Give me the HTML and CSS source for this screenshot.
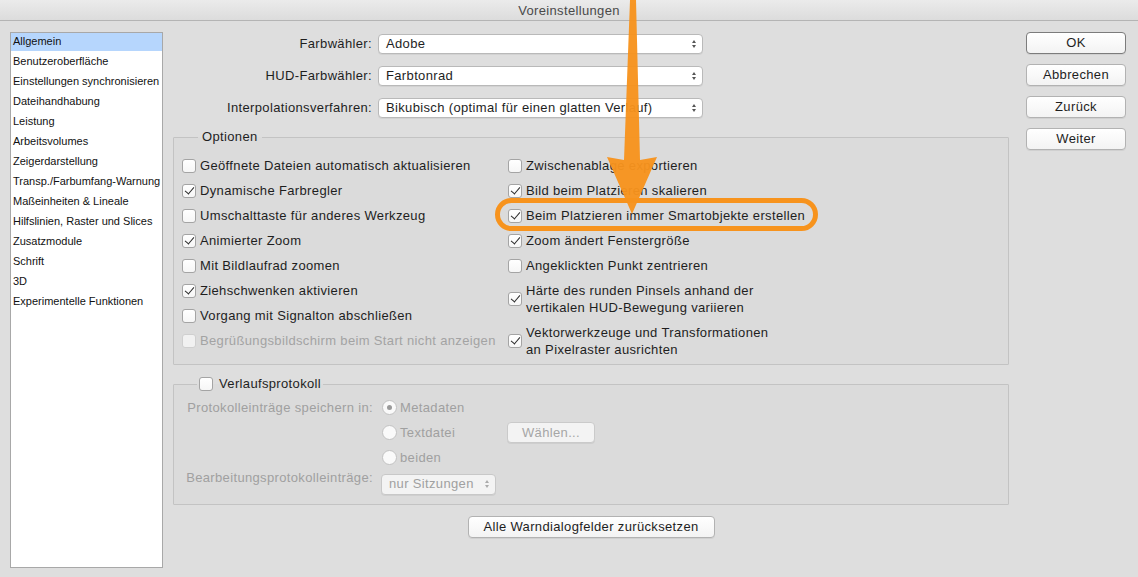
FILE: index.html
```html
<!DOCTYPE html>
<html lang="de">
<head>
<meta charset="utf-8">
<title>Voreinstellungen</title>
<link rel="stylesheet" href="styles.css">
</head>
<body>

<!-- Title bar -->
<div class="titlebar">Voreinstellungen</div>

<div class="window">
  <!-- Category list -->
  <ul class="sidebar">
    <li class="active">Allgemein</li>
    <li>Benutzeroberfläche</li>
    <li>Einstellungen synchronisieren</li>
    <li>Dateihandhabung</li>
    <li>Leistung</li>
    <li>Arbeitsvolumes</li>
    <li>Zeigerdarstellung</li>
    <li>Transp./Farbumfang-Warnung</li>
    <li>Maßeinheiten &amp; Lineale</li>
    <li>Hilfslinien, Raster und Slices</li>
    <li>Zusatzmodule</li>
    <li>Schrift</li>
    <li>3D</li>
    <li>Experimentelle Funktionen</li>
  </ul>

  <!-- Main panel -->
  <div class="content">
    <div class="selects">
      <label>Farbwähler:</label>
      <div class="select">Adobe<span class="updown"></span></div>
      <label>HUD-Farbwähler:</label>
      <div class="select">Farbtonrad<span class="updown"></span></div>
      <label>Interpolationsverfahren:</label>
      <div class="select">Bikubisch (optimal für einen glatten Verlauf)<span class="updown"></span></div>
    </div>

    <fieldset class="group options">
      <legend>Optionen</legend>
      <div class="col">
        <div class="row"><span class="cb"></span>Geöffnete Dateien automatisch aktualisieren</div>
        <div class="row"><span class="cb on"></span>Dynamische Farbregler</div>
        <div class="row"><span class="cb"></span>Umschalttaste für anderes Werkzeug</div>
        <div class="row"><span class="cb on"></span>Animierter Zoom</div>
        <div class="row"><span class="cb"></span>Mit Bildlaufrad zoomen</div>
        <div class="row"><span class="cb on"></span>Ziehschwenken aktivieren</div>
        <div class="row"><span class="cb"></span>Vorgang mit Signalton abschließen</div>
        <div class="row disabled"><span class="cb"></span>Begrüßungsbildschirm beim Start nicht anzeigen</div>
      </div>
      <div class="col">
        <div class="row"><span class="cb"></span>Zwischenablage exportieren</div>
        <div class="row"><span class="cb on"></span>Bild beim Platzieren skalieren</div>
        <div class="row"><span class="cb on"></span>Beim Platzieren immer Smartobjekte erstellen</div>
        <div class="row"><span class="cb on"></span>Zoom ändert Fenstergröße</div>
        <div class="row"><span class="cb"></span>Angeklickten Punkt zentrieren</div>
        <div class="row tall"><span class="cb on"></span>Härte des runden Pinsels anhand der<br>vertikalen HUD-Bewegung variieren</div>
        <div class="row tall"><span class="cb on"></span>Vektorwerkzeuge und Transformationen<br>an Pixelraster ausrichten</div>
      </div>
    </fieldset>

    <fieldset class="group history">
      <legend><span class="cb"></span>Verlaufsprotokoll</legend>
      <div class="history-grid">
        <span class="hlabel">Protokolleinträge speichern in:</span>
        <span class="radio-row"><span class="radio on"></span>Metadaten</span>
        <span></span>
        <span></span>
        <span class="radio-row"><span class="radio"></span>Textdatei</span>
        <span class="btn small disabled">Wählen...</span>
        <span></span>
        <span class="radio-row"><span class="radio"></span>beiden</span>
        <span></span>
        <span class="hlabel">Bearbeitungsprotokolleinträge:</span>
        <div class="select mini">nur Sitzungen<span class="updown"></span></div>
        <span></span>
      </div>
    </fieldset>

    <div class="reset-row">
      <span class="btn wide">Alle Warndialogfelder zurücksetzen</span>
    </div>
  </div>

  <!-- Dialog buttons -->
  <div class="buttons">
    <span class="btn default">OK</span>
    <span class="btn">Abbrechen</span>
    <span class="btn">Zurück</span>
    <span class="btn">Weiter</span>
  </div>
</div>

<!-- Orange annotation drawn over the dialog -->
<svg class="annotation" width="1138" height="577" viewBox="0 0 1138 577">
  <rect x="497.5" y="200.5" width="318" height="28" rx="14" fill="none" stroke="#f7931d" stroke-width="5"/>
  <polygon points="630,0 636,0 640,160 657,157 632,214 607,157 624,160" fill="#f7931d" opacity="0.96"/>
</svg>

</body>
</html>
```

FILE: styles.css
```css
/* ======== Reset ======== */
* {
  box-sizing: border-box;
  margin: 0;
  padding: 0;
}

/* ======== Page ======== */
body {
  position: relative;
  width: 1138px;
  height: 577px;
  background: #dedede;
  color: #1e1e1e;
  font-family: "Liberation Sans", Arial, sans-serif;
  font-size: 13px;
  line-height: 16px;
  letter-spacing: 0.35px;
  overflow: hidden;
}

.titlebar {
  height: 21px;
  line-height: 21px;
  text-align: center;
  color: #4a4a4a;
  background: linear-gradient(#ebebeb, #dcdcdc);
  border-bottom: 1px solid #b4b4b4;
}

.window {
  display: flex;
  padding: 11px 0 0 10px;
}

/* ======== Sidebar ======== */
.sidebar {
  width: 153px;
  height: 536px;
  list-style: none;
  background: #fff;
  border: 1px solid #a8a8a8;
  font-size: 11px;
  letter-spacing: 0;
}

.sidebar li {
  height: 20px;
  line-height: 17px;
  padding-left: 2px;
  color: #111;
}

.sidebar li.active {
  height: 18px;
  margin-bottom: 2px;
  background: #b6d6fd;
}

/* ======== Main panel ======== */
.content {
  width: 836px;
  margin-left: 10px;
}

.selects {
  display: grid;
  grid-template-columns: 199px 325px;
  column-gap: 6px;
  row-gap: 12px;
  align-items: center;
  margin-top: 2px;
}

.selects label {
  text-align: right;
}

.select {
  position: relative;
  height: 20px;
  line-height: 18px;
  padding-left: 7px;
  background: #fff;
  border: 1px solid #b9b9b9;
  border-radius: 4px;
  box-shadow: 0 1px 0 rgba(0, 0, 0, 0.05);
}

.updown {
  position: absolute;
  right: 5px;
  top: 5px;
  width: 5px;
  height: 8px;
}

.updown::before,
.updown::after {
  content: "";
  position: absolute;
  left: 0;
  border-left: 2.5px solid transparent;
  border-right: 2.5px solid transparent;
}

.updown::before { top: 0; border-bottom: 3px solid #555; }
.updown::after { bottom: 0; border-top: 3px solid #555; }

/* ======== Group boxes ======== */
.group {
  border: 1px solid #c3c3c3;
  border-radius: 1px;
  background: rgba(0, 0, 0, 0.01);
}

.group legend {
  margin-left: 16px;
  padding: 0 4px;
}

.options {
  display: flex;
  margin-top: 11px;
  padding: 8px 0 2px 8px;
}

.col {
  display: flex;
  flex-direction: column;
}

.col:first-of-type { width: 326px; }

.row {
  display: flex;
  align-items: center;
  height: 25px;
  white-space: nowrap;
}

.row.tall {
  height: 42px;
  line-height: 17px;
}

.row.disabled { color: #a3a3a3; }

.cb {
  position: relative;
  flex: none;
  width: 14px;
  height: 14px;
  margin-right: 4px;
  background: linear-gradient(#fff, #f6f6f6);
  border: 1px solid #a4a4a4;
  border-radius: 3px;
}

.row.disabled .cb {
  border-color: #cfcfcf;
  background: #f1f1f1;
}

.cb.on::after {
  content: "";
  position: absolute;
  left: 4px;
  top: 0px;
  width: 4px;
  height: 8px;
  border-right: 1.6px solid #2a2a2a;
  border-bottom: 1.6px solid #2a2a2a;
  transform: rotate(40deg);
}

/* ======== History group ======== */
.history {
  margin-top: 11px;
  padding: 3px 0 9px 8px;
}

.history legend {
  display: flex;
  align-items: center;
  margin-left: 15px;
  padding: 0 2px;
}

.history legend .cb { margin-right: 6px; }

.history-grid {
  display: grid;
  grid-template-columns: 191px 118px auto;
  grid-auto-rows: 25px;
  column-gap: 8px;
  align-items: center;
  color: #a0a0a0;
}

.history-grid > :nth-last-child(-n+3) { height: 26px; }

.hlabel {
  text-align: right;
  white-space: nowrap;
}

.radio-row {
  display: flex;
  align-items: center;
  white-space: nowrap;
}

.radio {
  position: relative;
  width: 15px;
  height: 15px;
  margin: 0 3px 0 1px;
  background: #fafafa;
  border: 1px solid #c2c2c2;
  border-radius: 50%;
}

.radio.on::after {
  content: "";
  position: absolute;
  left: 4px;
  top: 4px;
  width: 5px;
  height: 5px;
  border-radius: 50%;
  background: #9a9a9a;
}

.select.mini {
  width: 115px;
  height: 21px;
  margin-top: 3px;
  background: #f3f3f3;
  border-color: #c8c8c8;
}

.select.mini .updown::before { border-bottom-color: #aaa; }
.select.mini .updown::after { border-top-color: #aaa; }

/* ======== Buttons ======== */
.btn {
  display: block;
  height: 22px;
  line-height: 20px;
  text-align: center;
  background: linear-gradient(#fff, #f3f3f3);
  border: 1px solid #b2b2b2;
  border-radius: 4px;
  box-shadow: 0 1px 0 rgba(0, 0, 0, 0.06);
}

.btn.small {
  width: 88px;
  height: 21px;
}

.btn.disabled {
  color: #a6a6a6;
  background: #f3f3f3;
  border-color: #cacaca;
}

.reset-row {
  display: flex;
  justify-content: center;
  margin-top: 11px;
}

.btn.wide {
  width: 247px;
}

.buttons {
  display: flex;
  flex-direction: column;
  gap: 10px;
  width: 100px;
  margin-left: 17px;
}

.buttons .btn { height: 22px; }

.btn.default {
  border-color: #7c7c7c;
}

/* ======== Annotation overlay ======== */
.annotation {
  position: absolute;
  top: 0;
  left: 0;
  pointer-events: none;
}
```
